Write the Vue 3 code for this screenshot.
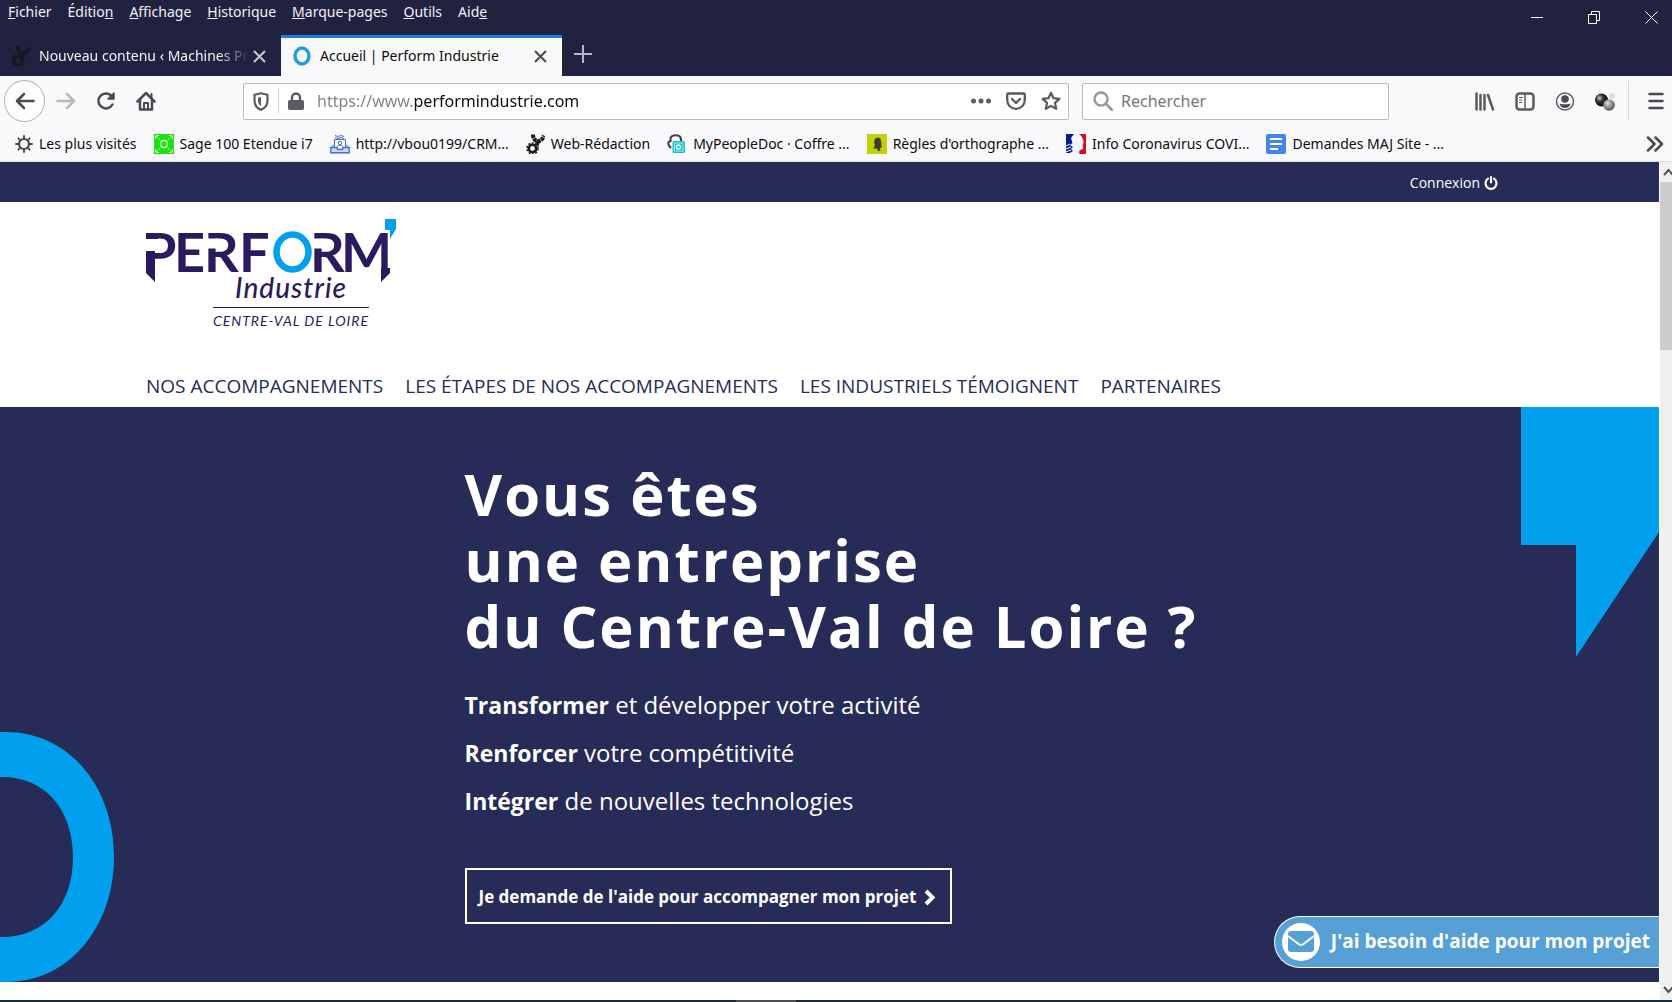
<script setup>
import { ref } from 'vue'

const menus = [
  { key: 'F', after: 'ichier' },
  { before: 'Éditio', key: 'n' },
  { key: 'A', after: 'ffichage' },
  { key: 'H', after: 'istorique' },
  { key: 'M', after: 'arque-pages' },
  { key: 'O', after: 'utils' },
  { before: 'Aid', key: 'e' },
]

const bookmarks = [
  { icon: 'gear', label: 'Les plus visités' },
  { icon: 'sage', label: 'Sage 100 Etendue i7' },
  { icon: 'crm', label: 'http://vbou0199/CRM...' },
  { icon: 'cogs', label: 'Web-Rédaction' },
  { icon: 'vault', label: 'MyPeopleDoc · Coffre ...' },
  { icon: 'rules', label: "Règles d'orthographe ..." },
  { icon: 'covid', label: 'Info Coronavirus COVI...' },
  { icon: 'docs', label: 'Demandes MAJ Site - ...' },
]

const navLinks = [
  'NOS ACCOMPAGNEMENTS',
  'LES ÉTAPES DE NOS ACCOMPAGNEMENTS',
  'LES INDUSTRIELS TÉMOIGNENT',
  'PARTENAIRES',
]

const goals = [
  { strong: 'Transformer', rest: 'et développer votre activité' },
  { strong: 'Renforcer', rest: 'votre compétitivité' },
  { strong: 'Intégrer', rest: 'de nouvelles technologies' },
]

const url = ref('https://www.performindustrie.com')
const query = ref('')
</script>

<template>
  <div class="window">
    <header class="titlebar">
      <div class="title-row">
        <nav class="menubar" aria-label="Menu">
          <button v-for="m in menus" :key="m.key" type="button">{{ m.before }}<u>{{ m.key }}</u>{{ m.after }}</button>
        </nav>
        <div class="controls">
          <button type="button" aria-label="Réduire">
            <svg width="13" height="13"><path d="M0 6.5H12" stroke="#fff" /></svg>
          </button>
          <button type="button" aria-label="Restaurer">
            <svg width="13" height="13" fill="none" stroke="#fff"><path d="M.5 3.500H8.500V12.500H.5z M3.500 3.500V.5H11.500V9.500H8.500" /></svg>
          </button>
          <button type="button" aria-label="Fermer">
            <svg width="13" height="13" stroke="#fff"><path d="M.5 .5L12.500 12.500M12.500 .5L.5 12.500" /></svg>
          </button>
        </div>
      </div>
      <div class="tabs">
        <div class="tab">
          <svg width="19" height="20" viewBox="0 0 19 20" fill="none" stroke="#16161f">
            <circle cx="7" cy="14.500" r="4" stroke-width="3" /><circle cx="7" cy="14.500" r="6" stroke-width="1.500" stroke-dasharray="2 2" />
            <path d="M7 0.500c0 5 3 7 6 6.500s4-3 5-5.500" stroke-width="3.500" stroke-dasharray="3.500 .6" /><path d="M12.500 7l-2 4.500" stroke-width="3.500" />
          </svg>
          <span class="tab-title faded">Nouveau contenu ‹ Machines Pr</span>
          <button type="button" aria-label="Fermer l'onglet"><svg width="13" height="13" stroke="#c9c9d3" stroke-width="2"><path d="M1 1L12 12M12 1L1 12" /></svg></button>
        </div>
        <div class="tab active">
          <svg width="19" height="20" viewBox="0 0 19 20"><ellipse cx="10" cy="10" rx="7" ry="8" fill="none" stroke="#2a9bdc" stroke-width="3.500" /></svg>
          <span class="tab-title">Accueil | Perform Industrie</span>
          <button type="button" aria-label="Fermer l'onglet"><svg width="13" height="13" stroke="#4a4a4f" stroke-width="2"><path d="M1 1L12 12M12 1L1 12" /></svg></button>
        </div>
        <button class="new-tab" type="button" aria-label="Nouvel onglet"><svg width="18" height="18" stroke="#b6b6c4" stroke-width="2"><path d="M9 0V18M0 9H18" /></svg></button>
      </div>
    </header>

    <div class="toolbar">
      <div class="nav-buttons">
        <button class="back" type="button" aria-label="Page précédente">
          <svg width="20" height="18" fill="none" stroke="#4a4a4f" stroke-width="2.500" stroke-linecap="round" stroke-linejoin="round"><path d="M18.500 9H2M9 2L2 9l7 7" /></svg>
        </button>
        <button type="button" aria-label="Page suivante">
          <svg width="20" height="18" fill="none" stroke="#b8b8ba" stroke-width="2.500" stroke-linecap="round" stroke-linejoin="round"><path d="M1.500 9H18M11 2l7 7-7 7" /></svg>
        </button>
        <button type="button" aria-label="Actualiser">
          <svg width="20" height="20" viewBox="0 0 20 20" fill="none" stroke="#4a4a4f" stroke-width="2.500" stroke-linecap="round"><path d="M16.500 13.500A7.500 7.500 0 1 1 16 5.500" /><path d="M18 2v6h-6z" fill="#4a4a4f" stroke-width="1.500" stroke-linejoin="round" /></svg>
        </button>
        <button type="button" aria-label="Accueil">
          <svg width="20" height="20" viewBox="0 0 20 20" fill="none" stroke="#4a4a4f" stroke-width="2.500" stroke-linecap="round" stroke-linejoin="round"><path d="M1.500 10.500L10 2l8.500 8.500M4 9v9.500h12V9" /><path d="M8 18v-6h4v6" stroke-width="2" /><path d="M15.500 3v3" stroke-width="2" /></svg>
        </button>
      </div>

      <div class="url-box">
        <svg width="16" height="19" viewBox="0 0 16 19"><path d="M8 1.200l6.500 1.500v6C14.500 13 12 16 8 17.800 4 16 1.500 13 1.500 8.700v-6z" fill="none" stroke="#5b5b5f" stroke-width="2.200" stroke-linejoin="round" /><path d="M8 5v9c-2-1.200-3-3-3-5.300V5.600z" fill="#5b5b5f" /></svg>
        <span class="sep"></span>
        <svg width="16" height="19" viewBox="0 0 16 19"><path d="M4 9V5.500a4 4 0 0 1 8 0V9" fill="none" stroke="#5b5b5f" stroke-width="2.400" /><rect x="0" y="8" width="16" height="10" rx="2" fill="#5b5b5f" /></svg>
        <input v-model="url" class="url" type="text" aria-label="Adresse" />
        <button type="button" aria-label="Actions"><svg width="20" height="20" fill="#5b5b5f"><circle cx="2.500" cy="10" r="2.500" /><circle cx="10" cy="10" r="2.500" /><circle cx="17.500" cy="10" r="2.500" /></svg></button>
        <button type="button" aria-label="Pocket"><svg width="20" height="20" viewBox="0 0 20 20" fill="none" stroke="#5b5b5f" stroke-width="2.300" stroke-linecap="round" stroke-linejoin="round"><path d="M2 2.500h16a.8.8 0 0 1 .8.8V9a8.800 8.800 0 0 1-17.600 0V3.300a.8.8 0 0 1 .8-.8z" /><path d="M6 8l4 4 4-4" /></svg></button>
        <button type="button" aria-label="Marquer cette page"><svg width="20" height="20" viewBox="0 0 20 20" fill="none" stroke="#5b5b5f" stroke-width="2.200" stroke-linejoin="round"><path d="M10 1.800l2.500 5.400 5.900.7-4.400 4 1.200 5.900L10 14.900l-5.200 2.900L6 11.900l-4.400-4 5.900-.7z" /></svg></button>
      </div>

      <label class="search-box">
        <svg width="20" height="20" viewBox="0 0 20 20" fill="none" stroke="#98989a" stroke-width="2.500" stroke-linecap="round"><circle cx="8" cy="8" r="6.500" /><path d="M13 13l6 6" /></svg>
        <input v-model="query" type="search" placeholder="Rechercher" aria-label="Rechercher" />
      </label>

      <div class="tools">
        <button type="button" aria-label="Bibliothèque"><svg width="20" height="19" stroke="#5b5b5f" stroke-width="2.500" stroke-linecap="round"><path d="M1.500 1.500v16M5.500 3v14.500M9.500 3v14.500M13 3l5 14.500" /></svg></button>
        <button type="button" aria-label="Panneaux latéraux"><svg width="20" height="19" fill="none" stroke="#5b5b5f"><rect x="1.500" y="1.500" width="17" height="16" rx="3" stroke-width="2.500" /><path d="M10 2v15" stroke-width="1.500" /><path d="M4 5.500h4M4 8h3M4 10.500h3" /></svg></button>
        <button type="button" aria-label="Compte"><svg width="20" height="19" viewBox="0 0 20 19"><circle cx="10" cy="9.500" r="8.500" fill="none" stroke="#5b5b5f" stroke-width="1.500" /><circle cx="10" cy="7" r="3.800" fill="#4a4a4f" /><path d="M4.500 11.500c1.500 1 9.500 1 11 0-.5 3-3 4.500-5.500 4.500s-5-1.500-5.500-4.500z" fill="#4a4a4f" /></svg></button>
        <button type="button" aria-label="Extension">
          <svg width="20" height="19" viewBox="0 0 20 19">
            <defs>
              <radialGradient id="dark" cx=".35" cy=".35" r=".7"><stop offset="0" stop-color="#ccc" /><stop offset=".4" stop-color="#333" /><stop offset="1" stop-color="#000" /></radialGradient>
              <radialGradient id="grey" cx=".4" cy=".35" r=".7"><stop offset="0" stop-color="#ddd" /><stop offset="1" stop-color="#444" /></radialGradient>
            </defs>
            <circle cx="17" cy="4" r="3" fill="#dedee0" /><circle cx="6.500" cy="8" r="6.500" fill="url(#dark)" /><circle cx="14" cy="13" r="5.800" fill="url(#grey)" />
          </svg>
        </button>
        <span class="divider"></span>
        <button type="button" aria-label="Ouvrir le menu"><svg width="16" height="18" stroke="#4a4a4f" stroke-width="2.500" stroke-linecap="round"><path d="M1.500 2h13M1.500 9h13M1.500 16h13" /></svg></button>
      </div>
    </div>

    <nav class="bookmarks" aria-label="Marque-pages">
      <a v-for="b in bookmarks" :key="b.label" href="#">
        <svg v-if="b.icon === 'gear'" width="18" height="20" viewBox="0 0 18 20" fill="none" stroke="#4a4a4f"><circle cx="9" cy="10" r="5" stroke-width="2.200" /><path d="M9 2v3M9 15v3M1 10h3M14 10h3M3.400 4.400l2 2M12.600 13.600l2 2M14.600 4.400l-2 2M5.400 13.600l-2 2" stroke-width="2" stroke-linecap="round" /></svg>
        <svg v-else-if="b.icon === 'sage'" width="20" height="20" fill="none" stroke="#c8ffc0"><rect width="20" height="20" fill="#1fe012" stroke="none" /><circle cx="10" cy="10" r="3.500" stroke-width="1.500" /><path d="M1.500 5V1.500H5M15 1.500h3.500V5M1.500 15v3.500H5M15 18.500h3.500V15M2 2l4.500 4.500M18 2l-4.500 4.500M2 18l4.500-4.500M18 18l-4.500-4.500" stroke-dasharray="3 1" /></svg>
        <svg v-else-if="b.icon === 'crm'" width="20" height="20" fill="none" stroke="#4470c4"><path d="M4.500 14V5.500h11V14M1 13.500l3.500-3M19 13.500l-3.500-3M5 1.500l3 1 3-1 3 1M5 3.500l3 1 3-1 3 1" /><path d="M.8 13.500h5.200l2 2h4l2-2h5.200v5.200H.8z" fill="#c8d8f5" stroke-width="1.400" /><circle cx="10" cy="9" r="1.700" /><path d="M7 14c0-4 6-4 6 0" /></svg>
        <svg v-else-if="b.icon === 'cogs'" width="19" height="20" viewBox="0 0 19 20" fill="none" stroke="#1c1c1c"><circle cx="6.500" cy="14.500" r="3.700" stroke-width="2.500" /><circle cx="6.500" cy="14.500" r="5.500" stroke-width="1.500" stroke-dasharray="2 1.500" /><path d="M7 0.500c0 5 3 7 6 6.500s4-3 5-5.500" stroke-width="4" stroke-dasharray="3.500 .6" /><path d="M12.500 7l-2 4.500" stroke-width="4" /></svg>
        <svg v-else-if="b.icon === 'vault'" width="20" height="20" fill="none"><path d="M4 14C0 11 1 7.500 3.500 7V5c0-5 10-5 10.500 0v2" stroke="#3c4654" stroke-width="2.200" /><rect x="5.500" y="7" width="12.500" height="12" rx="1.500" fill="#16bfd0" /><rect x="7.500" y="9" width="8.500" height="8" stroke="#a5edf3" /><circle cx="11.500" cy="13" r="2" stroke="#e8fdff" stroke-width="1.500" /></svg>
        <svg v-else-if="b.icon === 'rules'" width="20" height="20"><rect width="20" height="20" fill="#c3d202" /><path d="M8.500 4.500c2-2 5-1 5.500 2l.8 7-2 .5.700 3H11l-1-2.500H6.500L8 11c-1.500-2-1-5 .5-6.500z" fill="#3d3d30" /></svg>
        <svg v-else-if="b.icon === 'covid'" width="20" height="20"><path d="M0 0h8L5 4l1.500 5L4 11l3 2-2 2 2 2-3 2H0z" fill="#0a1a8c" /><path d="M0 12l4-2M0 15l5-2M0 18l5-2" stroke="#fff" /><path d="M13 0h7v20h-7c1-2-.5-3 1-4l3-1c.8-2-1-3 .3-5 1-3-1-8-4.300-10z" fill="#d90b20" /></svg>
        <svg v-else width="20" height="20"><rect width="20" height="20" rx="2" fill="#4384f0" /><path d="M4 5h12M4 10h12M4 15h8" stroke="#fff" stroke-width="2.200" /></svg>
        <span>{{ b.label }}</span>
      </a>
      <button type="button" aria-label="Plus de marque-pages"><svg width="18" height="16" fill="none" stroke="#4a4a4f" stroke-width="2.500" stroke-linecap="round" stroke-linejoin="round"><path d="M2 1.500L8.500 8 2 14.500M9.500 1.500L16 8l-6.500 6.500" /></svg></button>
    </nav>

    <div class="viewport">
      <div class="page">
        <div class="topbar">
          <a href="#">Connexion
            <svg width="14" height="14" viewBox="0 0 14 14" fill="none" stroke="#fff" stroke-width="2.200" stroke-linecap="round"><path d="M4 2.700a5.500 5.500 0 1 0 6 0M7 1.200v5.300" /></svg>
          </a>
        </div>

        <div class="site-header">
          <a class="logo" href="#" aria-label="Perform Industrie Centre-Val de Loire">
            <svg width="252" height="112" viewBox="0 0 252 112">
              <text class="brand" y="54" x="-3 28 58 93">PERF</text>
              <text class="brand" y="54" x="164 195">RM</text>
              <ellipse cx="146.500" cy="34" rx="16" ry="17.500" fill="none" stroke="#00a0ee" stroke-width="6.500" />
              <path d="M0 20.500h10.500v12.500H0zM60 20.500h11v10H60zM166 20.500h11v10h-11z" fill="#fff" />
              <path d="M0 15h12v6H0zM0 33h9v31l-9-9zM235 50h9v5l-9 9z" fill="#2c1a5e" />
              <path d="M239 1h11v10l-6 10v-9h-5z" fill="#00a0ee" />
              <text class="sub" x="89" y="80">Industrie</text>
              <path d="M67 89.500h156" stroke="#2c1a5e" />
              <text class="region" x="67" y="108">CENTRE-VAL DE LOIRE</text>
            </svg>
          </a>
          <nav class="site-nav" aria-label="Navigation principale">
            <a v-for="l in navLinks" :key="l" href="#">{{ l }}</a>
          </nav>
        </div>

        <main class="hero">
          <svg class="comma" width="138" height="250"><path d="M0 0h138v125L55 250V138H0z" fill="#00a0ee" /></svg>
          <svg class="ring" width="114" height="250"><path d="M0 0H6C70 0 114 56 114 125S70 250 6 250H0V205H2C45 205 73 173 73 125S45 45 2 45H0z" fill="#00a0ee" /></svg>
          <h1>Vous êtes<br />une entreprise<br />du Centre-Val de Loire ?</h1>
          <p v-for="g in goals" :key="g.strong"><strong>{{ g.strong }}</strong> {{ g.rest }}</p>
          <a class="cta" href="#">Je demande de l'aide pour accompagner mon projet
            <svg width="12" height="17" fill="none" stroke="#fff" stroke-width="4"><path d="M2 2l6.500 6.500L2 15" /></svg>
          </a>
        </main>

        <a class="help" href="#">
          <svg width="38" height="38"><circle cx="19" cy="19" r="19" fill="#fff" /><rect x="6" y="8" width="26" height="21" rx="3" fill="#57a0d6" /><path d="M6 13l10.500 8q2.500 1.800 5 0L32 13" fill="none" stroke="#fff" stroke-width="2" /></svg>
          <span>J'ai besoin d'aide pour mon projet</span>
        </a>
      </div>
      <div class="scrollbar" aria-hidden="true">
        <svg width="12" height="20" fill="none" stroke="#505050" stroke-width="2"><path d="M4 13l4.500-5 4.500 5" /></svg>
        <div class="thumb"></div>
        <svg class="down" width="12" height="20" fill="none" stroke="#505050" stroke-width="2"><path d="M4 7l4.500 5 4.500-5" /></svg>
      </div>
    </div>
    <div class="taskbar"><span></span></div>
  </div>
</template>

<style>
html, body, #app { height: 100%; }
body { margin: 0; overflow: hidden; }
</style>

<style scoped>
.window {
  display: flex;
  flex-direction: column;
  min-height: 100vh;
  background: #fff;
  font: 14px/20px "Noto Sans", "Open Sans", sans-serif;
  color: #0c0c0d;
}
button {
  display: flex;
  align-items: center;
  padding: 0;
  border: 0;
  background: none;
  font: inherit;
  color: inherit;
}
a { color: inherit; text-decoration: none; }
svg { flex: none; display: block; }
input {
  min-width: 0;
  padding: 0;
  border: 0;
  outline: 0;
  background: none;
  font: 16px/24px "Noto Sans", "Open Sans", sans-serif;
}

.titlebar { background: #20223f; color: #f3f3f8; }
.title-row { display: flex; justify-content: space-between; height: 35px; }
.menubar { display: flex; gap: 16px; height: 24px; padding-left: 8px; }
.menubar button { display: block; }
.controls { display: flex; gap: 44px; padding-right: 14px; }
.tabs { display: flex; height: 41px; }
.tab {
  display: flex;
  align-items: center;
  gap: 9px;
  box-sizing: border-box;
  width: 281px;
  padding: 1px 15px 0 11px;
}
.tab.active { background: #f9f9fb; color: #0c0c0d; border-top: 3px solid #1c7de0; padding: 0 15px 2px 11px; }
.tab-title { flex: 1; min-width: 0; overflow: hidden; white-space: nowrap; }
.faded { margin-right: -5px; mask-image: linear-gradient(90deg, #000 85%, transparent); }
.new-tab { padding: 0 12px 4px; }

.toolbar {
  display: flex;
  align-items: center;
  height: 50px;
  padding: 0 8px 0 4px;
  background: #f9f9fb;
}
.nav-buttons { display: flex; align-items: center; gap: 20px; margin-right: 87px; }
.nav-buttons .back {
  justify-content: center;
  box-sizing: border-box;
  width: 41px;
  height: 42px;
  margin-right: -9px;
  border: 1px solid #b1b1b5;
  border-radius: 50%;
  background: #fdfdfe;
}
.url-box, .search-box {
  display: flex;
  align-items: center;
  box-sizing: border-box;
  height: 37px;
  border: 1px solid #bababf;
  border-radius: 2px;
  background: #fff;
}
.url-box { flex: 1; gap: 15px; padding: 0 7px 0 9px; }
.url-box .sep { width: 1px; height: 26px; margin: 0 -6px; background: #d7d7db; }
.url {
  flex: 1;
  margin-left: -2px;
  background: linear-gradient(90deg, #808084 97px, #0c0c0d 97px);
  background-clip: text;
  color: transparent;
}
.search-box { width: 307px; gap: 8px; margin-left: 13px; padding: 0 10px; }
.search-box input { flex: 1; appearance: none; }
.search-box input::placeholder { color: #76767a; opacity: 1; }
.tools { display: flex; align-items: center; gap: 20px; margin-left: 86px; }
.divider { width: 1px; height: 40px; margin: 0 -1px 0 -7px; background: #d7d7db; }

.bookmarks {
  display: flex;
  align-items: center;
  gap: 17px;
  box-sizing: border-box;
  height: 36px;
  padding: 0 8px 0 15px;
  background: #f9f9fb;
  border-bottom: 1px solid #dcdce2;
}
.bookmarks a { display: flex; align-items: center; gap: 6px; white-space: nowrap; }
.bookmarks button { margin-left: auto; }

.viewport { display: flex; flex: 1; font-family: "Open Sans", "Noto Sans", sans-serif; }
.page { position: relative; flex: 1; margin-right: 1px; overflow: hidden; }
.scrollbar { display: flex; flex-direction: column; width: 12px; background: #f0f0f0; }
.scrollbar .thumb { height: 168px; background: #cdcdcd; }
.scrollbar .down { margin-top: auto; }

.topbar { display: flex; justify-content: flex-end; padding: 11px 161px 9px 146px; background: #262b57; color: #fff; }
.topbar a { display: flex; align-items: center; gap: 4px; }
.site-header { padding: 16px 146px 0; }
.logo { display: block; }
.logo svg { overflow: visible; }
.brand { font: 700 54px "Lato", sans-serif; fill: #2c1a5e; }
.sub { font: italic 500 28px "Lato", sans-serif; letter-spacing: 1px; fill: #2c1a5e; }
.region { font: italic 14px "Lato", sans-serif; letter-spacing: 1px; fill: #2c1a5e; }
.site-nav {
  display: flex;
  gap: 22px;
  padding: 42px 0 7px;
  font-size: 19px;
  line-height: 28px;
  color: #262b57;
  white-space: nowrap;
}

.hero { position: relative; padding: 54px 0 58px 28%; background: #262b57; color: #fff; }
.comma { position: absolute; top: 0; right: 0; }
.ring { position: absolute; bottom: 0; left: 0; }
h1 { margin: 0 0 22px; font-size: 58px; line-height: 66px; font-weight: 700; letter-spacing: 2px; }
p { margin: 0; font-size: 24px; line-height: 48px; }
p strong { font-size: 23px; }
.cta {
  display: inline-flex;
  align-items: center;
  gap: 8px;
  margin-top: 43px;
  padding: 15px 14px 13px 12px;
  border: 2px solid #fff;
  font-size: 17px;
  line-height: 24px;
  font-weight: 700;
}
.cta, .help { white-space: nowrap; }
.help {
  position: absolute;
  right: 0;
  bottom: 32px;
  display: flex;
  align-items: center;
  gap: 11px;
  box-sizing: border-box;
  height: 52px;
  padding: 0 9px 0 7px;
  border: 1px solid #fff;
  border-right: 0;
  border-radius: 26px 0 0 26px;
  background: #57a0d6;
  color: #fff;
  font-size: 19px;
  font-weight: 700;
}
.help span { padding-bottom: 3px; }
.taskbar { height: 2px; background: #1d2a3c; }
.taskbar span { display: block; width: 60px; height: 2px; margin-left: 44%; background: #4b5058; }
</style>
